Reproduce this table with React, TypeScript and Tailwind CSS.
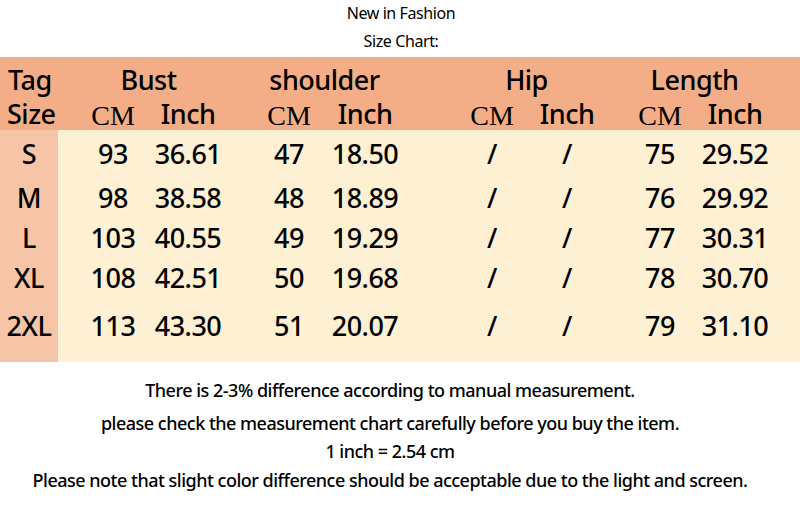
const rows = [
  { size: "S", cells: ["93", "36.61", "47", "18.50", "/", "/", "75", "29.52"], h: "h-[48px]" },
  { size: "M", cells: ["98", "38.58", "48", "18.89", "/", "/", "76", "29.92"], h: "h-[40px]" },
  { size: "L", cells: ["103", "40.55", "49", "19.29", "/", "/", "77", "30.31"], h: "h-[40px]" },
  { size: "XL", cells: ["108", "42.51", "50", "19.68", "/", "/", "78", "30.70"], h: "h-[40px]" },
  { size: "2XL", cells: ["113", "43.30", "51", "20.07", "/", "/", "79", "31.10"], h: "h-[56px]" },
];

// left offset of each 70px column, written out so Tailwind picks them up
const gaps = ["ml-[20px]", "ml-[5px]", "ml-[31px]", "ml-[6px]", "ml-[57px]", "ml-[5px]", "ml-[23px]", "ml-[5px]"];
const groupGaps = ["ml-[18px]", "ml-[31px]", "ml-[57px]", "ml-[23px]"];
const groups = ["Bust", "shoulder", "Hip", "Length"];

const sans = "font-['Noto_Sans',sans-serif]";
const serif = "font-['Liberation_Serif',serif]";

export default function App() {
  return (
    <main className={`w-[800px] h-[515px] bg-white text-black ${sans} overflow-hidden`}>
      <header className="flex flex-col items-center pt-[2px] text-[16px] leading-[22px] tracking-[-0.4px]">
        <p className="pl-[2px]">New in Fashion</p>
        <p className="mt-[6px] pl-[2px]">Size Chart:</p>
      </header>

      <section className="mt-[5px]">
        {/* header band */}
        <div className="bg-[#f3ae87] h-[73px] text-[27px] font-medium tracking-[-0.5px]">
          <div className="flex h-[40px] items-end leading-[34px]">
            <div className="w-[58px] pl-[8px]">Tag</div>
            {groups.map((g, i) => (
              <div key={g} className={`w-[145px] shrink-0 text-center ${groupGaps[i]}`}>
                {g}
              </div>
            ))}
          </div>
          <div className="flex h-[33px] items-center leading-[30px]">
            <div className="w-[58px] pl-[7px]">Size</div>
            {Array.from({ length: 8 }).map((_, i) => (
              <div key={i} className={`w-[70px] shrink-0 flex justify-center whitespace-nowrap ${gaps[i]}`}>
                {i % 2 === 0 ? (
                  <span className={`${serif} text-[28px] font-normal tracking-normal pt-[4px]`}>CM</span>
                ) : (
                  <span>Inch</span>
                )}
              </div>
            ))}
          </div>
        </div>

        {/* body */}
        <div className="relative bg-[#fdf0d3] pb-[8px] text-[27px] font-medium tracking-[-0.5px]">
          <div className="absolute left-0 top-0 bottom-0 w-[58px] bg-[#f6c5a7]" />
          {rows.map((r) => (
            <div key={r.size} className={`relative flex items-center ${r.h}`}>
              <div className="w-[58px] shrink-0 text-center">{r.size}</div>
              {r.cells.map((c, i) => (
                <div key={i} className={`w-[70px] shrink-0 flex justify-center whitespace-nowrap ${gaps[i]}`}>
                  {c}
                </div>
              ))}
            </div>
          ))}
        </div>
      </section>

      <footer className="flex flex-col items-center pt-[16px] pr-[20px] text-[18px] font-medium tracking-[-0.5px] leading-[24px]">
        <p>There is 2-3% difference according to manual measurement.</p>
        <p className="mt-[9px]">please check the measurement chart carefully before you buy the item.</p>
        <p className="mt-[4px]">1 inch = 2.54 cm</p>
        <p className="mt-[5px]">Please note that slight color difference should be acceptable due to the light and screen.</p>
      </footer>
    </main>
  );
}
